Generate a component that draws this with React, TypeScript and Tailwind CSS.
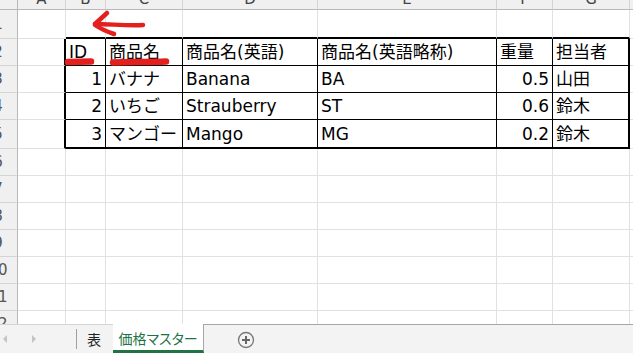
import React from "react";

const COLS = [
  { k: "A", w: "w-[48px]" },
  { k: "B", w: "w-[40px]" },
  { k: "C", w: "w-[77px]" },
  { k: "D", w: "w-[135px]" },
  { k: "E", w: "w-[179px]" },
  { k: "F", w: "w-[56px]" },
  { k: "G", w: "w-[77px]" },
  { k: "H", w: "w-[80px]" },
];

// row heights incl. bottom border (rows 1 and 5 carry the thick table edge)
const ROW_H: Record<number, string> = {
  1: "h-[29px]",
  5: "h-[29px]",
};

const TABLE: string[][] = [
  ["ID", "商品名", "商品名(英語)", "商品名(英語略称)", "重量", "担当者"],
  ["1", "バナナ", "Banana", "BA", "0.5", "山田"],
  ["2", "いちご", "Strauberry", "ST", "0.6", "鈴木"],
  ["3", "マンゴー", "Mango", "MG", "0.2", "鈴木"],
];

function Cell({ r, c }: { r: number; c: number }) {
  const inTable = r >= 2 && r <= 5 && c >= 1 && c <= 6;
  const tableRow = r >= 2 && r <= 5;

  let right = "border-r border-r-[#e1e1e1]";
  if (tableRow && (c === 0 || c === 6)) right = "border-r-2 border-r-black";
  else if (inTable) right = "border-r border-r-black";

  let bottom = "border-b border-b-[#e1e1e1]";
  if ((r === 1 || r === 5) && c >= 1 && c <= 6) bottom = "border-b-2 border-b-black";
  else if (r >= 2 && r <= 4 && c >= 1 && c <= 6) bottom = "border-b border-b-black";

  let text = "";
  let align = "justify-start pl-[3px]";
  if (inTable) {
    text = TABLE[r - 2][c - 1];
    if (r > 2 && (c === 1 || c === 5)) align = "justify-end pr-[3px]";
  }

  return (
    <div
      className={`${COLS[c].w} shrink-0 h-full flex items-end pb-[1px] leading-[24px] whitespace-nowrap overflow-hidden text-black ${right} ${bottom} ${align}`}
    >
      {text}
    </div>
  );
}

function Row({ r }: { r: number }) {
  return (
    <div className={`flex shrink-0 ${ROW_H[r] ?? "h-[27px]"}`}>
      <div className="w-[35px] -ml-[17px] shrink-0 h-full flex items-center justify-center pr-[4px] bg-[#f0f0f0] border-r border-r-[#b8b8b8] border-b border-b-[#d4d4d4] text-[15px] text-[#555]">
        {r}
      </div>
      {COLS.map((_, c) => (
        <Cell key={c} r={r} c={c} />
      ))}
    </div>
  );
}

function Annotations() {
  return (
    <svg
      className="absolute left-0 top-0 pointer-events-none"
      width="633"
      height="353"
      viewBox="0 0 633 353"
    >
      <g fill="none" stroke="#e3201d" strokeLinecap="round" strokeLinejoin="round">
        <path d="M143 25 C128 26 110 24 95 24" strokeWidth="4.5" />
        <path d="M95 24 L107 13" strokeWidth="4.5" />
        <path d="M95 25 C101 29 108 32 114 34" strokeWidth="4.5" />
        <path d="M68 62 L91 61.5" strokeWidth="6.5" />
        <path d="M113 62.5 C130 62 150 62 166 61.5" strokeWidth="6.5" />
      </g>
    </svg>
  );
}

export default function App() {
  const rows = [1, 2, 3, 4, 5, 6, 7, 8, 9, 10, 11, 12];
  return (
    <div className="relative w-[633px] h-[353px] overflow-hidden bg-white flex flex-col font-['DejaVu_Sans','Noto_Sans_CJK_JP',sans-serif] text-[17px]">
      <div className="h-[324px] shrink-0 overflow-hidden flex flex-col">
        {/* column headers, only the bottom strip is on screen */}
        <div className="flex shrink-0 h-[26px] -mt-[16px]">
          <div className="w-[35px] -ml-[17px] shrink-0 h-full bg-[#f0f0f0] border-r border-r-[#b8b8b8] border-b border-b-[#b8b8b8]" />
          {COLS.map((col) => (
            <div
              key={col.k}
              className={`${col.w} shrink-0 h-full flex items-end justify-center leading-[20px] text-[15px] text-[#444] bg-[#f0f0f0] border-r border-r-[#d4d4d4] border-b border-b-[#b8b8b8]`}
            >
              {col.k}
            </div>
          ))}
        </div>
        {rows.map((r) => (
          <Row key={r} r={r} />
        ))}
      </div>

      {/* sheet tabs */}
      <div className="flex h-[29px] shrink-0 bg-[#f3f3f3] font-['Noto_Sans_CJK_JP',sans-serif] [font-feature-settings:'palt'] text-[14px]">
        <div className="w-[76px] shrink-0 flex items-center border-t border-t-[#d4d4d4]">
          <svg width="8" height="10" viewBox="0 0 8 10" className="ml-[1px]">
            <path d="M6 1 L2 5 L6 9 Z" fill="#c4c4c4" />
          </svg>
          <svg width="8" height="10" viewBox="0 0 8 10" className="ml-[21px]">
            <path d="M2 1 L6 5 L2 9 Z" fill="#c4c4c4" />
          </svg>
        </div>
        <div className="w-[37px] shrink-0 flex items-center border-t border-t-[#d4d4d4]">
          <div className="h-[20px] border-l border-l-[#a0a0a0]" />
          <span className="ml-[10px] text-[#222]">表</span>
        </div>
        <div className="w-[91px] shrink-0 flex items-center justify-center bg-white border-r border-r-[#a6a6a6] border-b-[3px] border-b-[#217346] text-[#217346] pt-[2px]">
          価格マスター
        </div>
        <div className="flex-1 flex items-center border-t border-t-[#a6a6a6]">
          <svg width="18" height="18" viewBox="0 0 18 18" className="ml-[33px] mt-[1px]">
            <circle cx="9" cy="9" r="7.5" fill="none" stroke="#777" strokeWidth="1.3" />
            <path d="M9 5 V13 M5 9 H13" stroke="#666" strokeWidth="2" />
          </svg>
        </div>
      </div>

      <Annotations />
    </div>
  );
}
